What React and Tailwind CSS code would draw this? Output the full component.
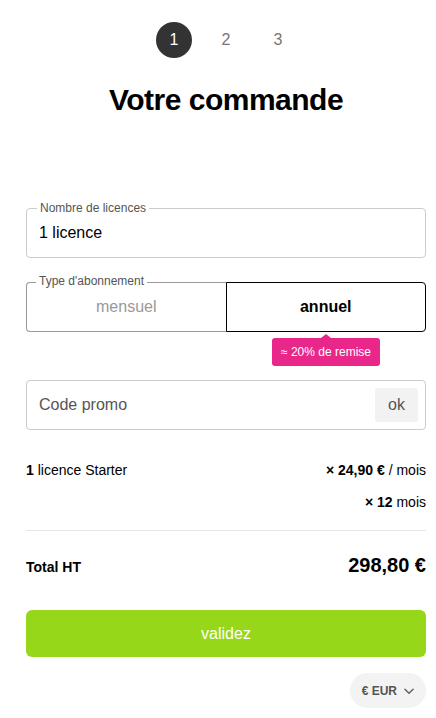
import React from "react";

function Legend({ children }) {
  return (
    <span className="absolute -top-[8px] left-[10px] bg-white px-[3px] text-[12px] leading-[14px] text-[#555]">
      {children}
    </span>
  );
}

export default function App() {
  return (
    <div
      className="min-h-[718px] bg-white pl-[26px] pr-[10px] pt-[22px] text-black"
      style={{ fontFamily: '"Liberation Sans", Arial, sans-serif' }}
    >
      {/* Stepper */}
      <div className="flex justify-center gap-[16px]">
        <div className="flex h-9 w-9 items-center justify-center rounded-full bg-[#333] text-[16px] text-white">1</div>
        <div className="flex h-9 w-9 items-center justify-center text-[16px] text-[#777]">2</div>
        <div className="flex h-9 w-9 items-center justify-center text-[16px] text-[#777]">3</div>
      </div>

      <h1 className="mt-[24px] text-center text-[30px] font-bold leading-[36px] tracking-[-0.5px]">
        Votre commande
      </h1>

      {/* Nombre de licences */}
      <div className="relative mt-[90px] flex h-[50px] items-center rounded-[4px] border border-[#ccc] px-[12px] text-[16px]">
        <Legend>Nombre de licences</Legend>
        <span>1 licence</span>
      </div>

      {/* Type d'abonnement */}
      <div className="relative mt-[24px] flex h-[50px] text-[16px]">
        <Legend>Type d'abonnement</Legend>
        <div className="flex flex-1 items-center justify-center rounded-l-[4px] border-y border-l border-[#999] text-[#999]">
          mensuel
        </div>
        <div className="flex flex-1 items-center justify-center rounded-r-[4px] border border-black font-bold">
          annuel
        </div>
      </div>
      <div className="flex">
        <div className="flex-1" />
        <div className="flex flex-1 justify-center">
          <div className="relative mt-[6px] rounded-[3px] bg-[#e9268a] px-[9px] py-[7px] text-[12px] leading-[14px] text-white">
            <span className="absolute -top-[4px] left-1/2 h-0 w-0 -translate-x-1/2 border-x-[5px] border-b-[4px] border-x-transparent border-b-[#e9268a]" />
            ≈ 20% de remise
          </div>
        </div>
      </div>

      {/* Code promo */}
      <div className="mt-[14px] flex h-[50px] items-center justify-between rounded-[4px] border border-[#ccc] pl-[12px] pr-[7px] text-[16px]">
        <span className="text-[#555]">Code promo</span>
        <span className="flex h-[34px] w-[43px] items-center justify-center rounded-[3px] bg-[#f2f2f2] text-[#555]">ok</span>
      </div>

      {/* Summary */}
      <div className="mt-[30px] flex items-baseline justify-between text-[14px] leading-[20px]">
        <span>
          <b>1</b> licence Starter
        </span>
        <span>
          <b>× 24,90 €</b> / mois
        </span>
      </div>
      <div className="mt-[12px] flex justify-end text-[14px] leading-[20px]">
        <span>
          <b>× 12</b> mois
        </span>
      </div>
      <div className="mt-[18px] h-px bg-[#e5e5e5]" />

      <div className="mt-[20px] flex items-baseline justify-between leading-[28px]">
        <span className="text-[14px] font-bold">Total HT</span>
        <span className="text-[20px] font-bold">298,80 €</span>
      </div>

      <button className="mt-[29px] flex h-[47px] w-full items-center justify-center rounded-[6px] bg-[#96d71a] text-[16px] text-white">
        validez
      </button>

      <div className="mt-[16px] flex justify-end pb-[10px]">
        <div className="flex h-[35px] items-center gap-[5px] rounded-full bg-[#f3f3f3] pl-[12px] pr-[10px] text-[12px] font-bold text-[#555]">
          <span>€ EUR</span>
          <svg width="14" height="14" viewBox="0 0 24 24" fill="none" stroke="#666" strokeWidth="2.6" strokeLinecap="round" strokeLinejoin="round">
            <path d="M5 9l7 7 7-7" />
          </svg>
        </div>
      </div>
    </div>
  );
}
